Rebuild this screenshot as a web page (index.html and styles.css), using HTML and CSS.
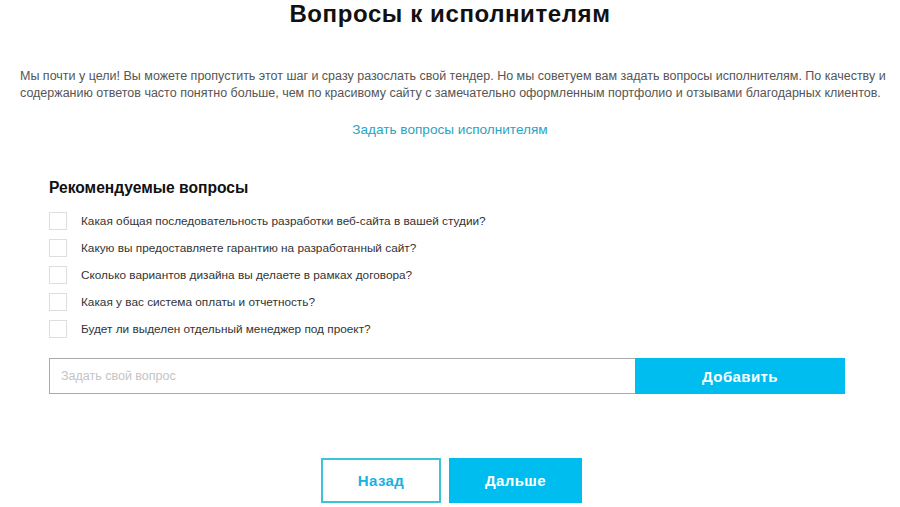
FILE: index.html
```html
<!DOCTYPE html>
<html lang="ru">
<head>
    <meta charset="UTF-8">
    <meta name="viewport" content="width=device-width, initial-scale=1.0">
    <title>Вопросы к исполнителям</title>
    <link rel="stylesheet" href="styles.css">
</head>
<body>

    <div class="page">
        <h1>Вопросы к исполнителям</h1>

        <p class="intro">Мы почти у цели! Вы можете пропустить этот шаг и сразу разослать свой тендер. Но мы советуем вам задать вопросы исполнителям. По качеству и содержанию ответов часто понятно больше, чем по красивому сайту с замечательно оформленным портфолио и отзывами благодарных клиентов.</p>

        <a href="#" class="ask-link">Задать вопросы исполнителям</a>

        <div class="questions">
            <h3>Рекомендуемые вопросы</h3>

            <label class="question"><span class="box"></span>Какая общая последовательность разработки веб-сайта в вашей студии?</label>
            <label class="question"><span class="box"></span>Какую вы предоставляете гарантию на разработанный сайт?</label>
            <label class="question"><span class="box"></span>Сколько вариантов дизайна вы делаете в рамках договора?</label>
            <label class="question"><span class="box"></span>Какая у вас система оплаты и отчетность?</label>
            <label class="question"><span class="box"></span>Будет ли выделен отдельный менеджер под проект?</label>

            <!-- Own question -->
            <div class="add-row">
                <input type="text" class="add-input" placeholder="Задать свой вопрос">
                <button type="button" class="btn btn-add">Добавить</button>
            </div>
        </div>

        <div class="nav">
            <button type="button" class="btn btn-back">Назад</button>
            <button type="button" class="btn btn-next">Дальше</button>
        </div>
    </div>

</body>
</html>
```

FILE: styles.css
```css
/* Global styles */
body, html {
    margin: 0;
    padding: 0;
    background-color: #ffffff;
    font-family: "Liberation Sans", Arial, sans-serif;
    color: #333;
}

/* Main page */
.page {
    width: 900px;
    display: flex;
    flex-direction: column;
    align-items: center;
}

h1 {
    margin: 0;
    font-size: 24px;
    line-height: 28px;
    font-weight: bold;
    color: #111;
    letter-spacing: 0.6px;
}

.intro {
    margin: 40px 0 0;
    padding: 0 10px 0 20px;
    font-size: 12.5px;
    line-height: 17px;
    color: #555;
    text-align: left;
}

.ask-link {
    margin-top: 19px;
    font-size: 13.6px;
    line-height: 18px;
    color: #2aa3c6;
    text-decoration: none;
}

/* Recommended questions */
.questions {
    align-self: stretch;
    margin: 39px 55px 0 49px;
}

h3 {
    margin: 0 0 9px;
    font-size: 15.6px;
    line-height: 20px;
    font-weight: bold;
    color: #111;
}

.question {
    display: flex;
    align-items: center;
    height: 27px;
    font-size: 11.8px;
    color: #333;
}

.box {
    width: 16px;
    height: 16px;
    border: 1px solid #dedede;
    margin-right: 14px;
    flex-shrink: 0;
}

.add-row {
    display: flex;
    margin-top: 16px;
    height: 36px;
}

.add-input {
    width: 586px;
    box-sizing: border-box;
    border: 1px solid #a9a9a9;
    border-right: none;
    padding: 0 11px;
    font-family: "Liberation Sans", Arial, sans-serif;
    font-size: 12.5px;
    color: #333;
    outline: none;
}

.add-input::placeholder {
    color: #c4c4c4;
}

.btn {
    font-family: "Liberation Sans", Arial, sans-serif;
    font-weight: bold;
    font-size: 15px;
    letter-spacing: 0.4px;
    cursor: pointer;
    box-sizing: border-box;
}

.btn-add {
    width: 210px;
    background-color: #00bdef;
    color: #ffffff;
    border: none;
}

/* Navigation buttons */
.nav {
    display: flex;
    gap: 8px;
    margin-top: 64px;
    margin-left: 3px;
}

.btn-back {
    width: 120px;
    height: 45px;
    background-color: #ffffff;
    border: 2px solid #3ec3d6;
    color: #18b2e0;
}

.btn-next {
    width: 133px;
    height: 45px;
    background-color: #00bdef;
    border: none;
    color: #ffffff;
}
```
